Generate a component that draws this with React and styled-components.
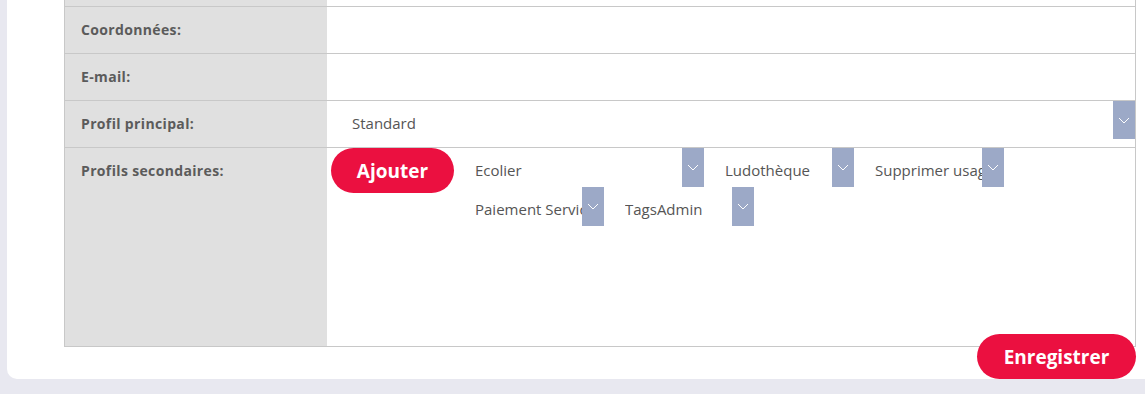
import { createGlobalStyle, styled } from "styled-components";

const GlobalStyle = createGlobalStyle`
  html, body {
    margin: 0;
    padding: 0;
    background: #e8e8f0;
    overflow: hidden;
    font-family: "Open Sans", "Liberation Sans", sans-serif;
  }
`;

const Page = styled.div`
  padding: 0 0 15px 7px;
`;

const Card = styled.div`
  background: #fff;
  border-radius: 10px;
  margin-top: -61px;
  margin-right: -20px;
  padding: 20px 29px 0 57px;
`;

const Table = styled.div`
  border-left: 1px solid #c8c8c8;
  border-right: 1px solid #c8c8c8;
  border-bottom: 1px solid #c8c8c8;
`;

const Row = styled.div`
  display: grid;
  grid-template-columns: 262px 1fr;
  border-top: 1px solid #c8c8c8;
  min-height: ${(props) => props.$height || 46}px;
`;

const Label = styled.div`
  background: #e0e0e0;
  padding-left: 16px;
  line-height: 46px;
  font-size: 14px;
  letter-spacing: 0.35px;
  font-weight: 700;
  color: #5b5b5b;
`;

const Cell = styled.div`
  display: flex;
  align-items: flex-start;
  padding-left: ${(props) => props.$pad || 0}px;
`;

const Pill = styled.button`
  border: none;
  border-radius: 23px;
  background: #eb1040;
  color: #fff;
  font-family: inherit;
  font-weight: 700;
  font-size: 19px;
  height: 45px;
  width: ${(props) => props.$width}px;
  padding: 0;
  cursor: pointer;
  flex-shrink: 0;
`;

const SelectList = styled.div`
  display: flex;
  flex-wrap: wrap;
  column-gap: 21px;
  margin-left: 21px;
  flex: 1;
`;

const Select = styled.div`
  display: flex;
  height: ${(props) => props.$height || 39}px;
  width: ${(props) => (props.$width ? `${props.$width}px` : "100%")};
  flex: ${(props) => (props.$width ? "none" : "1")};
`;

const SelectText = styled.span`
  flex: 1;
  min-width: 0;
  padding-left: ${(props) => props.$pad || 0}px;
  line-height: 44px;
  font-size: 15px;
  color: #555;
  white-space: nowrap;
  overflow: hidden;
`;

const Arrow = styled.span`
  width: 22px;
  flex-shrink: 0;
  background: #9ca9c7;
  display: flex;
  align-items: center;
  justify-content: center;
`;

const Footer = styled.div`
  display: flex;
  justify-content: flex-end;
  margin-top: -13px;
`;

function Chevron() {
  return (
    <svg width="12" height="7" viewBox="0 0 12 7">
      <polyline points="1,1 6,6 11,1" fill="none" stroke="#fff" strokeWidth="1" />
    </svg>
  );
}

function Dropdown({ value, width, pad, height }) {
  return (
    <Select $width={width} $height={height}>
      <SelectText $pad={pad}>{value}</SelectText>
      <Arrow>
        <Chevron />
      </Arrow>
    </Select>
  );
}

const secondaires = [
  { value: "Ecolier", width: 229 },
  { value: "Ludothèque", width: 129 },
  { value: "Supprimer usager", width: 129 },
  { value: "Paiement Service", width: 129 },
  { value: "TagsAdmin", width: 129 },
];

export default function App() {
  return (
    <>
      <GlobalStyle />
      <Page>
        <Card>
          <Table>
            <Row>
              <Label />
              <Cell />
            </Row>
            <Row>
              <Label>Coordonnées:</Label>
              <Cell />
            </Row>
            <Row>
              <Label>E-mail:</Label>
              <Cell />
            </Row>
            <Row>
              <Label>Profil principal:</Label>
              <Cell>
                <Dropdown value="Standard" pad={25} height={38} />
              </Cell>
            </Row>
            <Row $height={198}>
              <Label>Profils secondaires:</Label>
              <Cell $pad={4}>
                <Pill $width={123}>Ajouter</Pill>
                <SelectList>
                  {secondaires.map((item) => (
                    <Dropdown key={item.value} value={item.value} width={item.width} />
                  ))}
                </SelectList>
              </Cell>
            </Row>
          </Table>
          <Footer>
            <Pill $width={159}>Enregistrer</Pill>
          </Footer>
        </Card>
      </Page>
    </>
  );
}
